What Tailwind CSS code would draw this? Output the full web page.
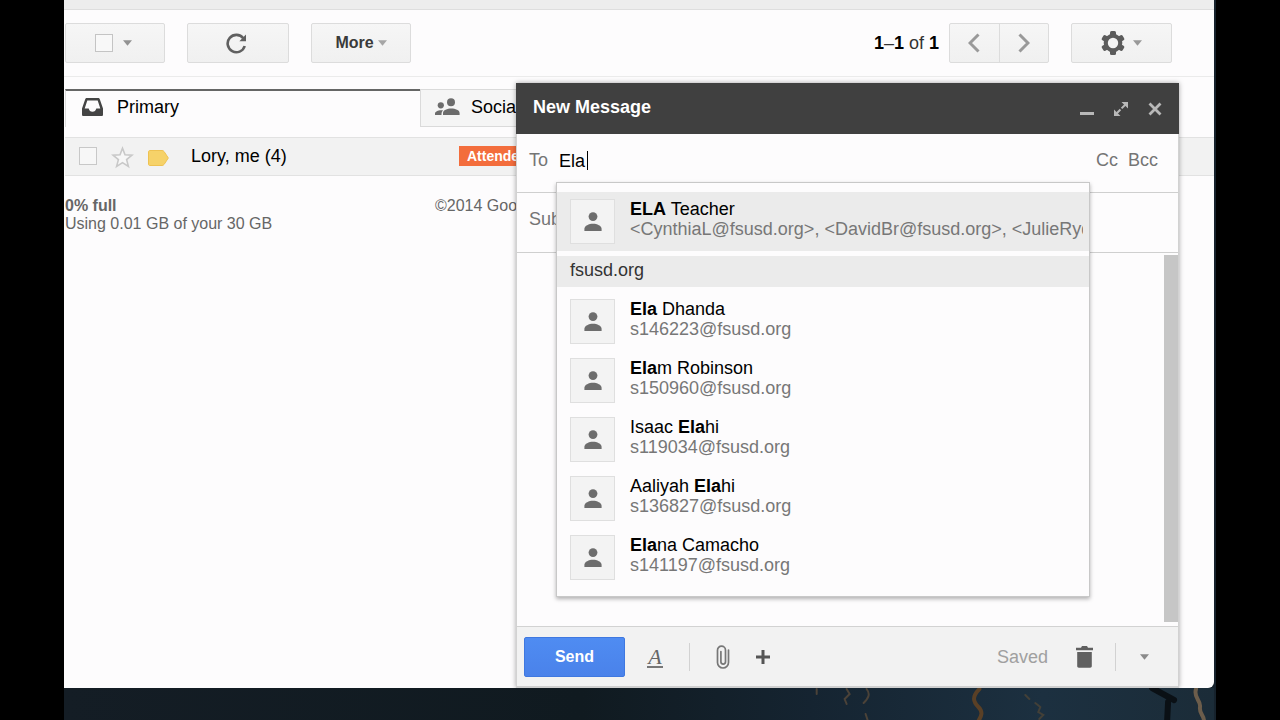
<!DOCTYPE html>
<html lang="en">

<head>
    <meta charset="UTF-8">
    <meta name="viewport" content="width=device-width, initial-scale=1.0">
    <title>Inbox - New Message</title>
    <script src="https://cdn.jsdelivr.net/npm/@tailwindcss/browser@4"></script>
</head>

<body class="h-screen overflow-hidden bg-black px-16 font-['Liberation_Sans',Arial,sans-serif] text-lg leading-5 text-black">
    <svg class="hidden">
        <symbol id="person" viewBox="0 0 18 20">
            <circle cx="9" cy="4.6" r="4.4" />
            <path d="M.4 19v-2.2c0-3 4.600-5 8.600-5s8.600 2 8.600 5V19z" />
        </symbol>
        <symbol id="caret" viewBox="0 0 10 6">
            <path d="M0 0h10L5 6z" />
        </symbol>
    </svg>

    <div class="relative flex h-full flex-col bg-[#16222c] pr-0.5">
        <!-- Mail window -->
        <main class="flex min-h-0 flex-1 flex-col overflow-hidden rounded-br-md bg-[#fdfcfd]">
            <div class="h-2.5 shrink-0 border-b border-[#dedede] bg-[#ededed]"></div>

            <div class="flex shrink-0 items-center border-b border-[#ebebeb] py-[13px] pr-[42px] pl-px">
                <div class="flex h-10 w-[100px] items-center justify-center gap-2.5 rounded-xs border border-[#dcdcdc] bg-linear-to-b from-[#f6f6f6] to-[#f0f0f0] pr-1">
                    <input type="checkbox" aria-label="Select all" class="size-[18px] appearance-none border border-[#c4c4c4] bg-[#f8f8f8]">
                    <button type="button" aria-label="Select options">
                        <svg class="h-[6px] w-[9px] fill-[#929292]"><use href="#caret" /></svg>
                    </button>
                </div>
                <button type="button" aria-label="Refresh" class="ml-[22px] flex h-10 w-[102px] items-center justify-center rounded-xs border border-[#dcdcdc] bg-linear-to-b from-[#f6f6f6] to-[#f0f0f0]">
                    <svg class="-ml-1 size-[22px]" viewBox="0 0 22 22">
                        <path d="M19.700 14A8.700 8.700 0 1 1 18.300 6.300" fill="none" stroke="#606060" stroke-width="2.600" />
                        <path d="M21 2.600v6.600h-6.600z" fill="#606060" />
                    </svg>
                </button>
                <button type="button" class="ml-[22px] flex h-10 w-[100px] items-center justify-center gap-1 rounded-xs border border-[#dcdcdc] bg-linear-to-b from-[#f6f6f6] to-[#f0f0f0] text-base font-bold text-[#3a3a3a]">
                    More
                    <svg class="h-[6px] w-[9px] fill-[#a6a6a6]"><use href="#caret" /></svg>
                </button>

                <div class="ml-auto text-[#333]"><b class="text-black">1</b>–<b class="text-black">1</b> of <b class="text-black">1</b></div>
                <div class="ml-2.5 flex h-10 w-[100px] divide-x divide-[#dcdcdc] rounded-xs border border-[#dcdcdc] bg-linear-to-b from-[#f6f6f6] to-[#f0f0f0]">
                    <button type="button" aria-label="Newer" class="flex flex-1 items-center justify-center">
                        <svg class="h-5 w-3" viewBox="0 0 12 20"><path d="M10.500 1.500L2 10l8.500 8.500" fill="none" stroke="#999" stroke-width="3" /></svg>
                    </button>
                    <button type="button" aria-label="Older" class="flex flex-1 items-center justify-center">
                        <svg class="h-5 w-3" viewBox="0 0 12 20"><path d="M1.500 1.500L10 10l-8.500 8.500" fill="none" stroke="#999" stroke-width="3" /></svg>
                    </button>
                </div>
                <button type="button" aria-label="Settings" class="ml-[22px] flex h-10 w-[101px] items-center justify-center gap-2 rounded-xs border border-[#dcdcdc] bg-linear-to-b from-[#f6f6f6] to-[#f0f0f0]">
                    <svg class="size-6" viewBox="0 0 24 24">
                        <g fill="#5c5c5c">
                            <rect x="9" y="0" width="6" height="24" rx="1.500" />
                            <rect x="9" y="0" width="6" height="24" rx="1.500" transform="rotate(60 12 12)" />
                            <rect x="9" y="0" width="6" height="24" rx="1.500" transform="rotate(120 12 12)" />
                            <circle cx="12" cy="12" r="9.300" />
                        </g>
                        <circle cx="12" cy="12" r="5.200" fill="#f4f4f4" />
                    </svg>
                    <svg class="h-[6px] w-[9px] fill-[#999]"><use href="#caret" /></svg>
                </button>
            </div>

            <!-- Category tabs -->
            <nav class="mt-3 ml-px flex h-[38px] shrink-0">
                <a href="#primary" class="flex w-[355px] items-center border-t-2 border-l border-t-[#666] border-l-[#dcdcdc] pb-1 pl-4">
                    <svg class="h-5 w-[21px]" viewBox="0 0 21 20">
                        <path fill-rule="evenodd" d="M5 1h11c1 0 1.500.4 1.800 1.300L21 11.500v6c0 1-.5 1.500-1.500 1.500h-18C.5 19 0 18.500 0 17.500v-6L3.200 2.300C3.500 1.400 4 1 5 1zm.3 2.400L2.700 11.500h4c.4 2 1.800 3.300 3.800 3.300s3.400-1.300 3.800-3.300h4L15.700 3.400z" fill="#444" />
                    </svg>
                    <span class="ml-3.5">Primary</span>
                </a>
                <a href="#social" class="flex w-[355px] items-center border border-[#dadada] bg-[#f5f5f5] pb-0.5 pl-3.5">
                    <svg class="h-[18px] w-[25px] fill-[#6c6c6c]" viewBox="0 0 25 18">
                        <circle cx="5.800" cy="7.300" r="3.100" />
                        <circle cx="16" cy="4.300" r="4" />
                        <path d="M0 17v-1.500c0-2 3-3.300 6-3.300.8 0 1.500.1 2.100.3C6.800 13.600 6.500 14.800 6.500 17z" />
                        <path d="M8 17v-2c0-2.800 4.300-4.500 8.300-4.500s8.300 1.700 8.300 4.500v2z" />
                    </svg>
                    <span class="ml-[11px]">Social</span>
                </a>
            </nav>

            <div class="mt-2.5 ml-px flex h-[39px] shrink-0 items-center border-y border-[#e2e2e2] bg-[#f2f2f2] pb-px pl-3.5">
                <input type="checkbox" aria-label="Select conversation" class="size-[18px] appearance-none border border-[#c8c8c8] bg-[#f7f7f7]">
                <button type="button" aria-label="Star" class="ml-3.5">
                    <svg class="mt-0.5 size-[23px]" viewBox="0 0 23 23">
                        <path d="M11.500 2.300l2.500 6.500 7 .4-5.400 4.400 1.800 6.800-5.900-3.800-5.900 3.800 1.800-6.800L2 9.200l7-.4z" fill="#f7f7f7" stroke="#c8c8c8" stroke-width="1.600" />
                    </svg>
                </button>
                <svg class="mt-1 ml-3.5 h-4 w-[21px]" viewBox="0 0 21 16">
                    <path d="M2 .5h12c1 0 1.700.5 2.200 1.200L20.300 8l-4.100 6.300c-.5.700-1.200 1.200-2.200 1.200H2c-1 0-1.500-.5-1.500-1.500V2C.5 1 1 .5 2 .5z" fill="#f6d269" stroke="#eec252" />
                </svg>
                <span class="ml-[22px] w-[268px]">Lory, me (4)</span>
                <span class="bg-[#f36d3c] px-2 text-sm leading-5 font-bold text-white">Attendees</span>
            </div>

            <footer class="mt-[21px] ml-px flex text-base leading-[18px] text-[#666]">
                <div class="w-[370px]">
                    <p class="font-bold">0% full</p>
                    <p>Using 0.01 GB of your 30 GB</p>
                </div>
                <p>©2014 Google</p>
            </footer>
        </main>

        <!-- Wallpaper below the window -->
        <svg class="h-8 w-full shrink-0" viewBox="0 0 1152 32" preserveAspectRatio="none">
            <defs>
                <linearGradient id="water">
                    <stop offset="0" stop-color="#141d25" />
                    <stop offset=".45" stop-color="#101a20" />
                    <stop offset=".65" stop-color="#152431" />
                    <stop offset=".85" stop-color="#1c3040" />
                    <stop offset="1" stop-color="#1b2c38" />
                </linearGradient>
            </defs>
            <rect width="1152" height="32" fill="url(#water)" />
            <g fill="none" stroke-linecap="round">
                <path d="M917 1c-8 8-6 13-1 18s3 9 0 14" stroke="#5a4026" stroke-width="4" />
                <path d="M1134 1c-3 9 5 11 4 18s4 8 4 14" stroke="#6c5d4b" stroke-width="4" />
                <path d="M784 1l3 5-5 5 2 5M804 1c4 5 2 9-3 14M803 26l2 6M754 1v5" stroke="#4b4238" stroke-width="2" />
                <path d="M963 7l4 4M973 15l5 4-2 5 5 3-4 4" stroke="#434038" stroke-width="2" />
                <path d="M1090 0l22 12M1106 14l-1 20" stroke="#0a1015" stroke-width="6" />
            </g>
        </svg>

        <!-- Compose window -->
        <section aria-label="New Message" class="absolute top-[83px] right-[37px] bottom-8 flex w-[663px] flex-col border-b-2 border-[#cfcfcf] bg-[#fdfcfd] shadow-[0_0_5px_rgba(0,0,0,0.35)] [clip-path:inset(-6px_-6px_0_-6px)]">
            <header class="flex h-[51px] shrink-0 items-center bg-[#404040] pr-4 pb-1 pl-[17px] text-white">
                <h2 class="mr-auto font-bold">New Message</h2>
                <button type="button" aria-label="Minimize">
                    <svg class="mt-1 size-4" viewBox="0 0 16 16"><path d="M1 12.500h14" stroke="#b8b8b8" stroke-width="3" /></svg>
                </button>
                <button type="button" aria-label="Full screen" class="ml-[18px]">
                    <svg class="mt-1 size-4" viewBox="0 0 16 16">
                        <path d="M8.500 1H15v6.500zM1 8.500V15h6.500z" fill="#b8b8b8" />
                        <path d="M3 13L13 3" stroke="#b8b8b8" stroke-width="2" stroke-dasharray="6.300 1.600" />
                    </svg>
                </button>
                <button type="button" aria-label="Close" class="ml-[18px]">
                    <svg class="mt-1 size-4" viewBox="0 0 16 16"><path d="M2.500 2.500l11 11M13.500 2.500l-11 11" stroke="#b8b8b8" stroke-width="2.800" /></svg>
                </button>
            </header>

            <form class="relative flex min-h-0 flex-1 flex-col border-x border-[#d2d2d2]">
                <div class="flex h-[59px] shrink-0 border-b border-[#cfcfcf] pt-4 pr-5 pl-3 text-[#757575]">
                    <label for="to">To</label>
                    <input id="to" type="text" value="Ela" autocomplete="off" class="mt-px ml-[11px] h-5 w-7 text-black caret-transparent outline-none">
                    <span class="mt-px h-[19px] w-px bg-black"></span>
                    <a href="#cc" class="ml-auto">Cc</a>
                    <a href="#bcc" class="ml-2.5">Bcc</a>
                </div>
                <input type="text" aria-label="Subject" placeholder="Subject" class="h-[60px] shrink-0 border-b border-[#cfcfcf] px-3 pb-1.5 outline-none placeholder:text-[#757575]">
                <div class="flex min-h-0 flex-1 pt-0.5 pb-1">
                    <textarea aria-label="Message body" class="flex-1 resize-none outline-none"></textarea>
                    <div class="w-3.5 bg-[#c6c6c6]"></div>
                </div>

                <!-- Contact suggestions -->
                <div class="absolute top-12 left-[39px] w-[534px] border border-[#c8c8c8] bg-[#fdfcfd] py-[9px] shadow-[0_2px_4px_rgba(0,0,0,0.3)]">
                    <ul>
                        <li class="flex h-[59px] items-center bg-[#ebebeb] pr-1.5 pl-[13px]">
                            <span class="flex size-[45px] shrink-0 items-center justify-center border border-[#dfdfdf] bg-[#f3f3f3]"><svg class="h-5 w-[18px] fill-[#6d6d6d]"><use href="#person" /></svg></span>
                            <div class="ml-[15px] min-w-0 overflow-hidden pb-1.5 whitespace-nowrap">
                                <p><b>ELA</b> Teacher</p>
                                <p class="text-[#777]">&lt;CynthiaL@fsusd.org&gt;, &lt;DavidBr@fsusd.org&gt;, &lt;JulieRyd@fsusd.org&gt;</p>
                            </div>
                        </li>
                    </ul>
                    <h3 class="my-[5px] bg-[#ebebeb] px-[13px] pt-1 pb-[7px] text-[#333]">fsusd.org</h3>
                    <ul>
                        <li class="flex h-[59px] items-center pl-[13px]">
                            <span class="flex size-[45px] items-center justify-center border border-[#dfdfdf] bg-[#f3f3f3]"><svg class="h-5 w-[18px] fill-[#6d6d6d]"><use href="#person" /></svg></span>
                            <div class="ml-[15px] pb-1.5">
                                <p><b>Ela</b> Dhanda</p>
                                <p class="text-[#777]">s146223@fsusd.org</p>
                            </div>
                        </li>
                        <li class="flex h-[59px] items-center pl-[13px]">
                            <span class="flex size-[45px] items-center justify-center border border-[#dfdfdf] bg-[#f3f3f3]"><svg class="h-5 w-[18px] fill-[#6d6d6d]"><use href="#person" /></svg></span>
                            <div class="ml-[15px] pb-1.5">
                                <p><b>Ela</b>m Robinson</p>
                                <p class="text-[#777]">s150960@fsusd.org</p>
                            </div>
                        </li>
                        <li class="flex h-[59px] items-center pl-[13px]">
                            <span class="flex size-[45px] items-center justify-center border border-[#dfdfdf] bg-[#f3f3f3]"><svg class="h-5 w-[18px] fill-[#6d6d6d]"><use href="#person" /></svg></span>
                            <div class="ml-[15px] pb-1.5">
                                <p>Isaac <b>Ela</b>hi</p>
                                <p class="text-[#777]">s119034@fsusd.org</p>
                            </div>
                        </li>
                        <li class="flex h-[59px] items-center pl-[13px]">
                            <span class="flex size-[45px] items-center justify-center border border-[#dfdfdf] bg-[#f3f3f3]"><svg class="h-5 w-[18px] fill-[#6d6d6d]"><use href="#person" /></svg></span>
                            <div class="ml-[15px] pb-1.5">
                                <p>Aaliyah <b>Ela</b>hi</p>
                                <p class="text-[#777]">s136827@fsusd.org</p>
                            </div>
                        </li>
                        <li class="flex h-[59px] items-center pl-[13px]">
                            <span class="flex size-[45px] items-center justify-center border border-[#dfdfdf] bg-[#f3f3f3]"><svg class="h-5 w-[18px] fill-[#6d6d6d]"><use href="#person" /></svg></span>
                            <div class="ml-[15px] pb-1.5">
                                <p><b>Ela</b>na Camacho</p>
                                <p class="text-[#777]">s141197@fsusd.org</p>
                            </div>
                        </li>
                    </ul>
                </div>

                <div class="flex h-[60px] shrink-0 items-center border-t border-[#d2d2d2] bg-[#f2f2f2] pt-px pr-[29px] pl-[7px]">
                    <button type="submit" class="h-10 w-[101px] rounded-xs border border-[#3f78e0] bg-linear-to-b from-[#4f8cf2] to-[#4a82ea] text-base font-bold text-white">Send</button>
                    <button type="button" aria-label="Formatting options" class="ml-[22px] w-4 border-b-2 border-[#777] font-['Liberation_Serif',serif] text-[22px] leading-[19px] text-[#666] italic">A</button>
                    <span class="ml-[26px] h-7 w-px bg-[#d2d2d2]"></span>
                    <button type="button" aria-label="Attach files" class="ml-[26px]">
                        <svg class="h-6 w-3.5" viewBox="0 0 14 24">
                            <path d="M12.500 5v12.500a5.500 5.500 0 0 1-11 0V5.200a4 4 0 0 1 8 0v11.600a2.300 2.300 0 0 1-4.600 0V6.500" fill="none" stroke="#777" stroke-width="1.700" stroke-linecap="round" />
                        </svg>
                    </button>
                    <button type="button" aria-label="Insert" class="ml-[26px]">
                        <svg class="size-3.5" viewBox="0 0 14 14"><path d="M7 0v14M0 7h14" stroke="#555" stroke-width="3" /></svg>
                    </button>
                    <span class="ml-auto text-[#a0a0a0]">Saved</span>
                    <button type="button" aria-label="Discard draft" class="ml-7">
                        <svg class="h-[22px] w-[17px] fill-[#606060]" viewBox="0 0 17 22">
                            <path d="M0 1.700h5L6 0h5l1 1.700h5v2.600H0zM1.200 6h14.600v14c0 1-.6 1.700-1.700 1.700H2.900c-1.100 0-1.700-.7-1.700-1.700z" />
                        </svg>
                    </button>
                    <span class="ml-[22px] h-7 w-px bg-[#d2d2d2]"></span>
                    <button type="button" aria-label="More options" class="ml-6">
                        <svg class="h-[6px] w-[9px] fill-[#8a8a8a]"><use href="#caret" /></svg>
                    </button>
                </div>
            </form>
        </section>
    </div>
</body>

</html>
